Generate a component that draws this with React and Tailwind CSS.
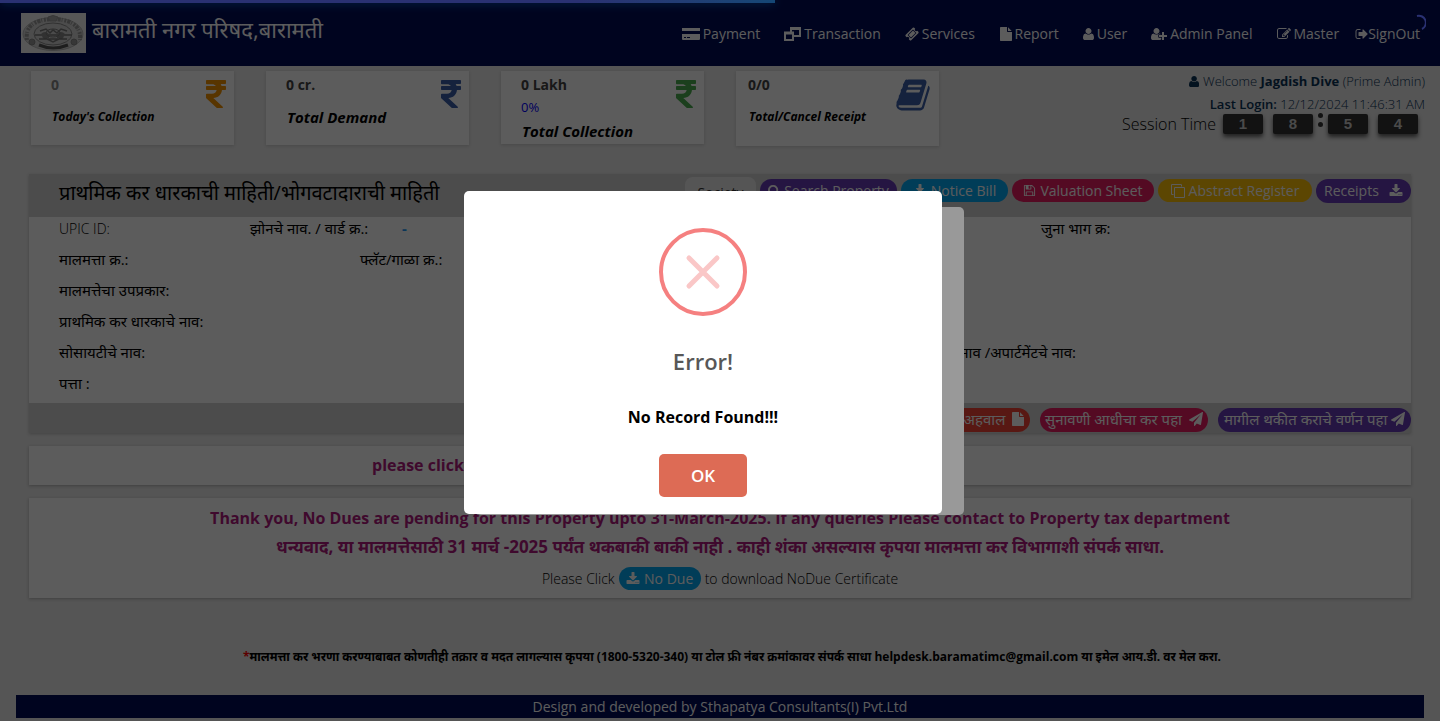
import React from 'react';
import { FaRupeeSign } from 'react-icons/fa';

const PATHS = {
  user: [1408, 1792, 'M1408 1405q0 120-73 189.5t-194 69.5h-874q-121 0-194-69.5t-73-189.5q0-53 3.5-103.5t14-109 26.5-108.5 43-97.5 62-81 85.5-53.5 111.5-20q9 0 42 21.5t74.5 48 108 48 133.5 21.5 133.5-21.5 108-48 74.5-48 42-21.5q61 0 111.5 20t85.5 53.5 62 81 43 97.5 26.5 108.5 14 109 3.5 103.5zm-320-893q0 159-112.5 271.5t-271.5 112.5-271.5-112.5-112.5-271.5 112.5-271.5 271.5-112.5 271.5 112.5 112.5 271.5z'],
  userPlus: [2048, 1792, 'M704 896q-159 0-271.5-112.5t-112.5-271.5 112.5-271.5 271.5-112.5 271.5 112.5 112.5 271.5-112.5 271.5-271.5 112.5zm960 128h352q13 0 22.5 9.5t9.5 22.5v192q0 13-9.5 22.5t-22.5 9.5h-352v352q0 13-9.5 22.5t-22.5 9.5h-192q-13 0-22.5-9.5t-9.5-22.5v-352h-352q-13 0-22.5-9.5t-9.5-22.5v-192q0-13 9.5-22.5t22.5-9.5h352v-352q0-13 9.5-22.5t22.5-9.5h192q13 0 22.5 9.5t9.5 22.5v352zm-736 224q0 52 38 90t90 38h256v238q-68 50-171 50h-874q-121 0-194-69t-73-190q0-53 3.5-103.5t14-109 26.5-108.5 43-97.5 62-81 85.5-53.5 111.5-20q19 0 39 17 79 61 154.5 91.5t164.5 30.5 164.5-30.5 154.5-91.5q20-17 39-17 132 0 217 96h-223q-52 0-90 38t-38 90v192z'],
  book: [1792, 1792, 'M1703 478q40 57 18 129l-275 906q-19 64-76.5 107.5t-122.5 43.5h-923q-77 0-148.5-53.5t-99.5-131.5q-24-67-2-127 0-4 3-27t4-37q1-8-3-21.5t-3-19.5q2-11 8-21t16.5-23.5 16.5-23.5q23-38 45-91.5t30-91.5q3-10 .5-30t-.5-28q3-11 17-28t17-23q21-36 42-92t25-90q1-9-2.5-32t.5-28q4-13 22-30.5t22-22.5q19-26 42.5-84.5t27.5-96.5q1-8-3-25.5t-2-26.5q2-8 9-18t18-23 17-21q8-12 16.5-30.5t15-35 16-36 19.5-32 26.5-23.5 36-11.5 47.5 5.5l-1 3q38-9 51-9h761q74 0 114 56t18 130l-274 906q-36 119-71.5 153.5t-128.5 34.5h-869q-27 0-38 15-11 16-1 43 24 70 144 70h923q29 0 56-15.5t35-41.5l300-987q7-22 5-57 38 15 59 43zm-1064 2q-4 13 2 22.5t20 9.5h608q13 0 25.5-9.5t16.5-22.5l21-64q4-13-2-22.5t-20-9.5h-608q-13 0-25.5 9.5t-16.5 22.5zm-83 256q-4 13 2 22.5t20 9.5h608q13 0 25.5-9.5t16.5-22.5l21-64q4-13-2-22.5t-20-9.5h-608q-13 0-25.5 9.5t-16.5 22.5z'],
  download: [1792, 1792, 'M1344 1344q0-26-19-45t-45-19-45 19-19 45 19 45 45 19 45-19 19-45zm256 0q0-26-19-45t-45-19-45 19-19 45 19 45 45 19 45-19 19-45zm128-224v320q0 40-28 68t-68 28h-1472q-40 0-68-28t-28-68v-320q0-40 28-68t68-28h465l135 136q58 56 136 56t136-56l136-136h464q40 0 68 28t28 68zm-325-569q17 41-14 70l-448 448q-18 19-45 19t-45-19l-448-448q-31-29-14-70 17-39 59-39h256v-448q0-26 19-45t45-19h256q26 0 45 19t19 45v448h256q42 0 59 39z'],
  edit: [1792, 1792, 'M888 1184l116-116-152-152-116 116v56h96v96h56zm440-720q-16-16-33 1l-350 350q-17 17-1 33t33-1l350-350q17-17 1-33zm80 594v190q0 119-84.5 203.5t-203.5 84.5h-832q-119 0-203.5-84.5t-84.5-203.5v-832q0-119 84.5-203.5t203.5-84.5h832q63 0 117 25 15 7 18 23 3 17-9 29l-49 49q-14 14-32 8-23-6-45-6h-832q-66 0-113 47t-47 113v832q0 66 47 113t113 47h832q66 0 113-47t47-113v-126q0-13 9-22l64-64q15-15 35-7t20 29zm-96-738l288 288-672 672h-288v-288zm444 132l-92 92-288-288 92-92q28-28 68-28t68 28l152 152q28 28 28 68t-28 68z'],
  signOut: [1664, 1792, 'M704 1440q0 4 1 20t.5 26.5-3 23.5-10 19.5-20.5 6.5h-320q-119 0-203.5-84.5t-84.5-203.5v-704q0-119 84.5-203.5t203.5-84.5h320q13 0 22.5 9.5t9.5 22.5q0 4 1 20t.5 26.5-3 23.5-10 19.5-20.5 6.5h-320q-66 0-113 47t-47 113v704q0 66 47 113t113 47h312l11.5 1 11.5 3 8 5.5 7 9 2 13.5zm928-544q0 26-19 45l-544 544q-19 19-45 19t-45-19-19-45v-288h-448q-26 0-45-19t-19-45v-384q0-26 19-45t45-19h448v-288q0-26 19-45t45-19 45 19l544 544q19 19 19 45z'],
  ticket: [1792, 1792, 'M1024 452l316 316-572 572-316-316zm-211 979l618-618q19-19 19-45t-19-45l-362-362q-18-18-45-18t-45 18l-618 618q-19 19-19 45t19 45l362 362q18 18 45 18t45-18zm889-637l-907 908q-37 37-90.5 37t-90.5-37l-126-125q56-56 56-136t-56-136-136-56-136 56l-125-126q-37-37-37-90.5t37-90.5l907-906q37-37 90.5-37t90.5 37l125 125q-56 56-56 136t56 136 136 56 136-56l126 125q37 37 37 90.5t-37 90.5z'],
  plane: [1792, 1792, 'M1764 11q33 24 27 64l-256 1536q-5 29-32 45-14 8-31 8-11 0-24-5l-453-185-242 295q-18 23-49 23-13 0-22-4-19-7-30.5-23.5t-11.5-36.5v-349l864-1059-1069 925-395-162q-37-14-40-55-2-40 32-59l1664-960q15-9 32-9 20 0 36 11z'],
  file: [1620, 1792, 'M1152 512v-472q22 14 36 28l408 408q14 14 28 36h-472zm-128 32q0 40 28 68t68 28h544v1056q0 40-28 68t-68 28h-1344q-40 0-68-28t-28-68v-1600q0-40 28-68t68-28h800v544z'],
  save: [1792, 1792, 'M512 1536h768v-384h-768v384zm896 0h128v-896q0-14-10-38.5t-20-34.5l-281-281q-10-10-34-20t-39-10v416q0 40-28 68t-68 28h-576q-40 0-68-28t-28-68v-416h-128v1280h128v-416q0-40 28-68t68-28h832q40 0 68 28t28 68v416zm-384-928v-320q0-13-9.5-22.5t-22.5-9.5h-192q-13 0-22.5 9.5t-9.5 22.5v320q0 13 9.5 22.5t22.5 9.5h192q13 0 22.5-9.5t9.5-22.5zm640 32v928q0 40-28 68t-68 28h-1344q-40 0-68-28t-28-68v-1344q0-40 28-68t68-28h928q40 0 88 20t76 48l280 280q28 28 48 76t20 88z'],
  clone: [1792, 1792, 'M1664 1632v-1088q0-13-9.5-22.5t-22.5-9.5h-1088q-13 0-22.5 9.5t-9.5 22.5v1088q0 13 9.5 22.5t22.5 9.5h1088q13 0 22.5-9.5t9.5-22.5zm128-1088v1088q0 66-47 113t-113 47h-1088q-66 0-113-47t-47-113v-1088q0-66 47-113t113-47h1088q66 0 113 47t47 113zm-384-384v160h-128v-160q0-13-9.5-22.5t-22.5-9.5h-1088q-13 0-22.5 9.5t-9.5 22.5v1088q0 13 9.5 22.5t22.5 9.5h160v128h-160q-66 0-113-47t-47-113v-1088q0-66 47-113t113-47h1088q66 0 113 47t47 113z'],
  search: [1664, 1792, 'M1152 832q0-185-131.5-316.5t-316.5-131.5-316.500 131.500-131.500 316.500 131.500 316.500 316.500 131.500 316.500-131.500 131.500-316.500zm512 832q0 52-38 90t-90 38q-54 0-90-38l-343-342q-179 124-399 124-143 0-273.500-55.500t-225-150-150-225-55.500-273.500 55.500-273.500 150-225 225-150 273.500-55.500 273.500 55.500 225 150 150 225 55.500 273.500q0 220-124 399l343 343q37 37 37 90z'],
};

function Icon({ name, className = 'h-[14px]' }) {
  const [w, h, d] = PATHS[name];
  return (
    <svg viewBox={`0 0 ${w} ${h}`} className={`${className} w-auto shrink-0`} fill="currentColor" aria-hidden="true">
      <path d={d} />
    </svg>
  );
}

function CardIcon() {
  return (
    <svg viewBox="0 0 18 12" className="h-[12px] w-[18px] shrink-0" fill="currentColor" aria-hidden="true">
      <path d="M0 0h18v3H0zM0 6h18v5q0 1-1 1H1q-1 0-1-1zM2 9v1h2V9zM5 9v1h3V9z" fillRule="evenodd" />
    </svg>
  );
}

function WindowsIcon() {
  return (
    <svg viewBox="0 0 17 14" className="h-[14px] w-[17px] shrink-0" fill="none" stroke="currentColor" strokeWidth="2" aria-hidden="true">
      <path d="M7 5V1h9v8h-6M1 6h8v7H1z" />
      <path d="M0 6h10M6 1.500h11" strokeWidth="3" />
    </svg>
  );
}

function Seal() {
  return (
    <svg viewBox="0 0 65 40" className="h-10 w-[65px] shrink-0" role="img" aria-label="Seal">
      <rect width="65" height="40" fill="#f2f2f2" />
      <ellipse cx="32" cy="21" rx="30" ry="16.500" fill="#d2d2d2" stroke="#b8b8b8" />
      <path d="M6 27Q3 7 32 6Q61 7 59 27" fill="none" stroke="#999" strokeWidth="4" strokeDasharray="2 1 3 1 1 2" />
      <ellipse cx="32" cy="21" rx="19" ry="11" fill="#cfcfcf" stroke="#888" strokeWidth="1" />
      <path d="M14 22h37M18 26h28M19 18l6-2 4 4 3-3 4 3 4-4 6 2M22 24l10 5 10-5" fill="none" stroke="#777" strokeWidth="1.500" />
      <path d="M20 21q4-4 8 0v4h-6zM36 21q4-4 8 0l-2 4h-6z" fill="#888" />
      <ellipse cx="32" cy="20" rx="7" ry="4" fill="none" stroke="#777" />
      <circle cx="11" cy="29" r="3" fill="#999" stroke="#888" />
      <circle cx="53" cy="29" r="3" fill="#999" stroke="#888" />
      <path d="M18 32Q32 38 47 32" fill="none" stroke="#555" strokeWidth="3" />
      <path d="M27 4q5-3 10 0l-2 4h-6z" fill="#aaa" stroke="#999" />
    </svg>
  );
}

function NavLink({ icon, label, className = 'gap-[3px]' }) {
  return (
    <a href="#" className={`flex items-center whitespace-nowrap text-sm ${className}`}>
      {icon}
      <span>{label}</span>
    </a>
  );
}

function StatCard({ value, percent, title, icon, valueClass = 'text-[#444]', titleClass = 'text-[15px] -mt-[3px]', className = 'h-[74px] pl-5' }) {
  return (
    <section className={`relative flex w-[203px] shrink-0 flex-col bg-white pr-2 pt-1 shadow-[0_1px_3px_rgba(0,0,0,0.15)] ${className}`}>
      <div className={`text-sm font-bold leading-5 ${valueClass}`}>{value}</div>
      <div className="h-[15px] shrink-0 text-[13px] leading-[25px] text-[#0000ff]">{percent}</div>
      <div className={`pl-px font-bold italic leading-5 ${titleClass}`}>{title}</div>
      <div className="absolute right-2 top-[6px]">{icon}</div>
    </section>
  );
}

function Pill({ className, children }) {
  return (
    <button type="button" className={`flex shrink-0 items-center whitespace-nowrap rounded-full leading-5 text-white ${className}`}>
      {children}
    </button>
  );
}

function Digit({ children }) {
  return (
    <span className="flex h-5 w-10 items-center justify-center rounded-xs bg-[#333] font-['Liberation_Sans',sans-serif] text-[15px] font-bold text-[#ccc] shadow-[0_3px_4px_rgba(0,0,0,0.6)]">
      {children}
    </span>
  );
}

export default function App() {
  return (
    <div className="flex min-h-screen flex-col bg-[#eaeaea] font-['Open_Sans','Noto_Sans',sans-serif] text-black">
      <header className="flex h-[66px] items-center justify-between bg-[#000c57] pl-[21px] pr-5 text-white">
        <div className="flex items-center gap-[6px]">
          <Seal />
          <h1 className="pb-2 text-[22px] font-normal leading-8">बारामती नगर परिषद,बारामती</h1>
        </div>
        <nav className="flex items-center gap-6 pt-[2px]">
          <NavLink icon={<CardIcon />} label="Payment" />
          <NavLink icon={<WindowsIcon />} label="Transaction" />
          <NavLink icon={<Icon name="ticket" />} label="Services" />
          <NavLink icon={<Icon name="file" />} label="Report" />
          <NavLink icon={<Icon name="user" />} label="User" />
          <NavLink icon={<Icon name="userPlus" />} label="Admin Panel" />
          <NavLink icon={<Icon name="edit" />} label="Master" />
          <NavLink icon={<Icon name="signOut" />} label="SignOut" className="-ml-2" />
        </nav>
      </header>

      <main className="flex flex-1 flex-col">
        <div className="flex h-[108px] justify-between pl-[31px] pr-[15px] pt-[5px]">
          <div className="flex items-start gap-8">
            <StatCard value="0" valueClass="text-[#888]" title="Today's Collection" titleClass="text-[12px] -mt-[3px]" icon={<FaRupeeSign className="h-[34px] w-5 text-[#f39200]" />} />
            <StatCard value="0 cr." title="Total Demand" icon={<FaRupeeSign className="h-[34px] w-5 text-[#3b5fa8]" />} />
            <StatCard value="0 Lakh" percent="0%" title="Total Collection" titleClass="text-[15px] mt-[11px]" className="h-[73px] pl-5" icon={<FaRupeeSign className="h-[34px] w-5 text-[#4caf50]" />} />
            <StatCard value="0/0" title="Total/Cancel Receipt" titleClass="text-[12px] -mt-[3px]" className="h-[75px] pl-3" icon={<Icon name="book" className="h-[36px] text-[#3b5fa8]" />} />
          </div>
          <div className="flex flex-col items-end text-[#0a3358]">
            <div className="flex items-center gap-1 text-[13px] leading-5">
              <Icon name="user" className="h-[13px]" />
              <span className="font-light">Welcome <b className="font-bold">Jagdish Dive</b> (Prime Admin)</span>
            </div>
            <div className="text-[13px] font-light leading-[26px]"><b className="font-semibold">Last Login:</b> 12/12/2024 11:46:31 AM</div>
            <div className="-mt-[5px] flex items-center gap-[10px] pr-[7px] text-black">
              <span className="-mr-[3px] text-base font-light leading-6">Session Time</span>
              <Digit>1</Digit>
              <Digit>8</Digit>
              <span className="-mx-[5px] -mt-2 flex flex-col gap-1">
                <i className="size-[5px] rounded-full bg-[#333]" />
                <i className="size-[5px] rounded-full bg-[#333]" />
              </span>
              <Digit>5</Digit>
              <Digit>4</Digit>
            </div>
          </div>
        </div>

        <div className="flex flex-col gap-[13px] px-[29px]">
          <section className="bg-white shadow-[0_1px_3px_rgba(0,0,0,0.2)]">
            <div className="flex h-[43px] items-start justify-between bg-[#d2d2d2] pl-[30px]">
              <h2 className="pt-[3px] text-xl font-normal leading-8">प्राथमिक कर धारकाची माहिती/भोगवटादाराची माहिती</h2>
              <div className="flex items-start gap-1 pt-[5px] text-sm">
                <button type="button" className="-mt-[2px] h-8 w-[71px] rounded-lg bg-[#ececec] text-[#333]">Society</button>
                <Pill className="h-[23px] w-[137px] justify-center gap-1 bg-[#673ab7]"><Icon name="search" className="h-[13px]" />Search Property</Pill>
                <Pill className="h-[23px] w-[107px] justify-center gap-1 bg-[#03a9f4]"><Icon name="download" />Notice Bill</Pill>
                <Pill className="h-[23px] w-[142px] justify-center gap-1 bg-[#e91e63]"><Icon name="save" className="h-[13px]" />Valuation Sheet</Pill>
                <Pill className="h-[23px] w-[154px] justify-center gap-1 bg-[#ffc107]"><Icon name="clone" />Abstract Register</Pill>
                <Pill className="h-6 w-[95px] justify-between bg-[#673ab7] px-2">Receipts<Icon name="download" /></Pill>
              </div>
            </div>
            <div className="pl-[30px] text-[15px] leading-[22px]">
              <div className="grid h-[31px] grid-cols-[191px_152px_1fr_370px]">
                <span className="text-sm font-light leading-6">UPIC ID:</span>
                <span>झोनचे नाव. / वार्ड क्र.:</span>
                <span className="font-bold text-[#2196f3]">-</span>
                <span>जुना भाग क्र:</span>
              </div>
              <div className="grid h-[31px] grid-cols-[301px_1fr]">
                <span>मालमत्ता क्र.:</span>
                <span>फ्लॅट/गाळा क्र.:</span>
              </div>
              <div className="h-[31px]">मालमत्तेचा उपप्रकार:</div>
              <div className="h-[31px]">प्राथमिक कर धारकाचे नाव:</div>
              <div className="flex h-[31px] justify-between pr-[335px]">
                <span>सोसायटीचे नाव:</span>
                <span>इमारतीचे नाव /अपार्टमेंटचे नाव:</span>
              </div>
              <div className="h-[31px]">पत्ता :</div>
            </div>
            <div className="flex h-[30px] items-center justify-end gap-[10px] bg-[#d2d2d2] pt-1 text-[15px]">
              <Pill className="h-6 w-[120px] justify-end gap-[6px] bg-[#f44336] pb-[2px] pr-[6px]">अहवाल<Icon name="file" /></Pill>
              <Pill className="h-6 w-[168px] justify-between bg-[#e91e63] px-[5px] pb-[2px]">सुनावणी आधीचा कर पहा<Icon name="plane" /></Pill>
              <Pill className="h-6 w-[193px] justify-between bg-[#673ab7] px-[6px] pb-[2px]">मागील थकीत कराचे वर्णन पहा<Icon name="plane" /></Pill>
            </div>
          </section>

          <section className="flex h-[39px] items-center justify-center bg-white pb-[2px] text-base font-bold text-[#b0197e] shadow-[0_1px_3px_rgba(0,0,0,0.25)]">
            <p className="w-[696px]">please click</p>
          </section>

          <section className="flex h-[100px] flex-col items-center bg-white pt-[7px] font-bold text-[#b0197e] shadow-[0_1px_3px_rgba(0,0,0,0.25)]">
            <p className="text-base leading-[27px]">Thank you, No Dues are pending for this Property upto 31-March-2025. If any queries Please contact to Property tax department</p>
            <p className="text-[17px] leading-[30px]">धन्यवाद, या मालमत्तेसाठी 31 मार्च -2025 पर्यंत थकबाकी बाकी नाही . काही शंका असल्यास कृपया मालमत्ता कर विभागाशी संपर्क साधा.</p>
            <div className="mt-[5px] flex items-center gap-1 text-sm font-light text-black">
              Please Click
              <Pill className="h-[23px] w-[82px] justify-center gap-1 bg-[#03a9f4] font-normal"><Icon name="download" />No Due</Pill>
              to download NoDue Certificate
            </div>
          </section>
        </div>

        <p className="mt-[47px] pl-6 text-center text-[12px] font-bold leading-6">
          <span className="text-[#ff0000]">*</span>मालमत्ता कर भरणा करण्याबाबत कोणतीही तक्रार व मदत लागल्यास कृपया (1800-5320-340) या टोल फ्री नंबर क्रमांकावर संपर्क साधा helpdesk.baramatimc@gmail.com या इमेल आय.डी. वर मेल करा.
        </p>
      </main>

      <footer className="mx-4 mb-[3px] h-[23px] bg-[#000c57] text-center text-sm leading-[23px] text-white">
        Design and developed by Sthapatya Consultants(I) Pvt.Ltd
      </footer>

      <div className="fixed inset-0 flex items-center justify-center bg-black/40">
        <div className="h-[308px] w-[488px] rounded-[5px] bg-white" />
      </div>

      <div className="fixed left-0 top-0 h-[3px] w-[775px] bg-linear-to-r from-[#4653bf] from-75% to-[#2277c4] shadow-[0_0_10px_#1166aa]" />
      <svg viewBox="0 0 18 18" className="fixed right-[14px] top-[14px] size-[18px]" fill="none" stroke="#4653bf" strokeWidth="2" aria-hidden="true">
        <path d="M9 2a7 7 0 0 1 5 13" />
      </svg>

      <div className="fixed inset-0 flex items-center justify-center bg-black/40 pb-4 pr-[34px]">
        <div role="alertdialog" aria-labelledby="alert-title" aria-describedby="alert-text" className="flex w-[478px] flex-col items-center rounded-[5px] bg-white pb-[17px] pt-[37px]">
          <svg viewBox="0 0 88 88" className="size-[88px]" fill="none" stroke="#f58080" strokeLinecap="round" aria-hidden="true">
            <circle cx="44" cy="44" r="42" strokeWidth="4" />
            <path d="M30 30l28 28M58 30L30 58" strokeWidth="5" stroke="#fac7c7" />
          </svg>
          <h2 id="alert-title" className="mt-[15px] text-[22px] font-semibold leading-[60px] text-[#575757]">Error!</h2>
          <p id="alert-text" className="mt-[14px] text-base font-bold leading-6">No Record Found!!!</p>
          <button type="button" className="mt-[25px] h-[43px] w-[88px] rounded-[5px] bg-[#dd6b55] text-[17px] font-semibold text-white">OK</button>
        </div>
      </div>
    </div>
  );
}
